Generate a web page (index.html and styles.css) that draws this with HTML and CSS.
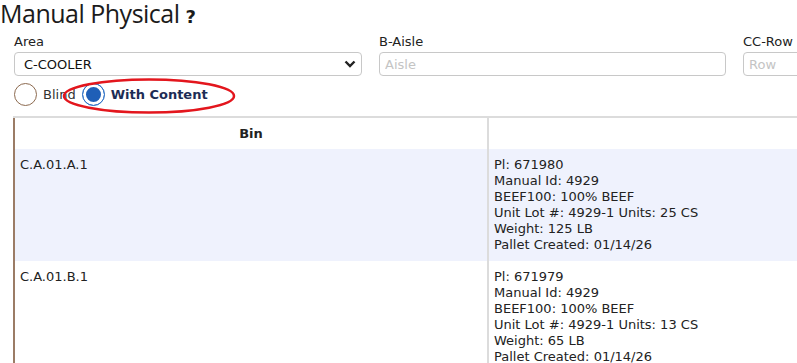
FILE: index.html
```html
<html>
	<head>
		<title>Manual Physical</title>
		<meta name="viewport" content="width=device-width,initial-scale=1">
		<link rel="stylesheet" href="styles.css">
	</head>
	<body>
		<div class="page">
			<h1 class="page-title">Manual Physical <span class="help">?</span></h1>
			<div class="filters">
				<div class="field">
					<label>Area</label>
					<div class="select">
						<span>C-COOLER</span>
						<svg width="12" height="8" viewBox="0 0 12 8"><path d="M1.5 1.5 L6 6 L10.5 1.5" fill="none" stroke="#222" stroke-width="2.4"/></svg>
					</div>
				</div>
				<div class="field">
					<label>B-Aisle</label>
					<input class="text-input" type="text" placeholder="Aisle">
				</div>
				<div class="field">
					<label>CC-Row</label>
					<input class="text-input" type="text" placeholder="Row">
				</div>
			</div>
			<div class="modes">
				<label class="mode"><span class="radio"></span>Blind</label>
				<label class="mode mode-on"><span class="radio radio-on"></span>With Content</label>
				<svg class="mark" width="176" height="38" viewBox="0 0 176 38"><ellipse cx="88" cy="19" rx="85" ry="16.5" fill="none" stroke="#e3161d" stroke-width="2.5"/></svg>
			</div>
			<table class="grid">
				<thead>
					<tr>
						<th class="col-bin">Bin</th>
						<th></th>
					</tr>
				</thead>
				<tbody>
					<tr class="alt">
						<td>C.A.01.A.1</td>
						<td>Pl: 671980<br>Manual Id: 4929<br>BEEF100: 100% BEEF<br>Unit Lot #: 4929-1 Units: 25 CS<br>Weight: 125 LB<br>Pallet Created: 01/14/26</td>
					</tr>
					<tr>
						<td>C.A.01.B.1</td>
						<td>Pl: 671979<br>Manual Id: 4929<br>BEEF100: 100% BEEF<br>Unit Lot #: 4929-1 Units: 13 CS<br>Weight: 65 LB<br>Pallet Created: 01/14/26</td>
					</tr>
				</tbody>
			</table>
		</div>
	</body>
</html>
```
FILE: styles.css
```css
* {
	margin: 0;
	padding: 0;
	box-sizing: border-box;
}

body {
	overflow: hidden;
	background: #fff;
	color: #222;
	font-family: 'DejaVu Sans', Verdana, sans-serif;
	font-size: 13px;
}

.page {
	width: 1200px;
}

.page-title {
	font-family: 'Open Sans', sans-serif;
	font-size: 25px;
	font-weight: 400;
	line-height: 26px;
	height: 34px;
	color: #1b1b1b;
	letter-spacing: -0.5px;
}

.help {
	font-family: 'DejaVu Sans', sans-serif;
	font-weight: bold;
	font-size: 18px;
	letter-spacing: 0;
}

.filters {
	display: grid;
	grid-template-columns: 348px 347px 348px;
	column-gap: 17px;
	padding-left: 14px;
}

.field label {
	display: block;
	font-size: 13px;
	line-height: 16px;
	height: 18px;
}

.select, .text-input {
	height: 24px;
	border: 1px solid #c8c8c8;
	border-radius: 4px;
	font-family: 'DejaVu Sans', sans-serif;
	font-size: 13px;
	background: #fff;
}

.select {
	display: flex;
	align-items: center;
	justify-content: space-between;
	padding: 0 5px 0 9px;
	color: #111;
}

.text-input {
	display: block;
	width: 100%;
	padding: 0 5px;
	color: #222;
	outline: none;
}

.text-input::placeholder {
	color: #c4c4c4;
}

.modes {
	display: flex;
	align-items: flex-start;
	gap: 6px;
	padding: 7px 0 0 14px;
	height: 40px;
	position: relative;
	font-size: 13px;
}

.mode {
	display: flex;
	align-items: center;
	gap: 6px;
	color: #333;
}

.mode-on {
	font-weight: bold;
	color: #1d2c55;
}

.radio {
	width: 23px;
	height: 23px;
	border-radius: 50%;
	border: 1px solid #8c6a4f;
	background: #fff;
}

.radio-on {
	border: 1px solid #2d73c9;
	box-shadow: inset 0 0 0 3px #fff;
	background: #1f5fb7;
}

.mark {
	position: absolute;
	left: 61px;
	top: 1px;
}

.grid {
	margin-left: 13px;
	border-collapse: collapse;
	width: 1000px;
	border-top: 2px solid #dcdcdc;
	border-left: 2px solid #9b7c66;
	font-size: 13px;
	line-height: 16px;
	color: #222;
}

.grid th {
	height: 32px;
	font-weight: bold;
	text-align: center;
	border-right: 2px solid #dcdcdc;
	background: #fff;
}

.grid .col-bin {
	width: 474px;
}

.grid td {
	vertical-align: top;
	text-align: left;
	padding: 8px 6px 8px 5px;
	border-right: 2px solid #dcdcdc;
}

.grid tr.alt td {
	background: #eff2fd;
}
```
